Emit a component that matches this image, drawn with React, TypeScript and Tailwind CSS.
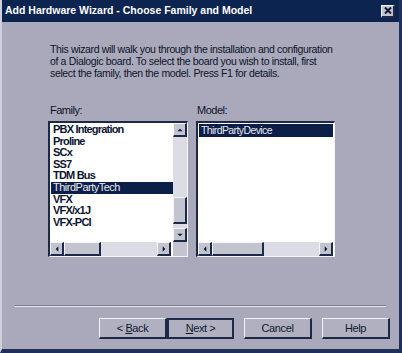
import React from "react";

const font = { fontFamily: '"Liberation Sans", Arial, sans-serif' };

function Arrow({ dir }: { dir: "up" | "down" | "left" | "right" }) {
  const pts: Record<string, string> = {
    up: "1,5 5,1 9,5",
    down: "1,1 5,5 9,1",
    left: "5,1 1,5 5,9",
    right: "1,1 5,5 1,9",
  };
  const vb = dir === "up" || dir === "down" ? "0 0 10 6" : "0 0 6 10";
  const w = dir === "up" || dir === "down" ? 8 : 4;
  const h = dir === "up" || dir === "down" ? 4 : 8;
  return (
    <svg width={w} height={h} viewBox={vb}>
      <polygon points={pts[dir]} fill="#0b1a3a" />
    </svg>
  );
}

function SBtn({ dir }: { dir: "up" | "down" | "left" | "right" }) {
  return (
    <div className="w-[14px] h-[14px] shrink-0 bg-[#c4c4d0] border-t border-l border-t-[#f4f4f8] border-l-[#f4f4f8] border-r-2 border-b-2 border-r-[#1c2a48] border-b-[#1c2a48] flex items-center justify-center">
      <Arrow dir={dir} />
    </div>
  );
}

function HScroll({ thumb, track }: { thumb: number; track: number }) {
  return (
    <div className="flex h-[14px] items-stretch">
      <SBtn dir="left" />
      <div className="shrink-0 bg-[#c4c4d0] border-t border-l border-t-[#f4f4f8] border-l-[#f4f4f8] border-r-2 border-b-2 border-r-[#1c2a48] border-b-[#1c2a48]" style={{ width: thumb }} />
      <div className="bg-[#dcdce4]" style={{ width: track }} />
      <SBtn dir="right" />
    </div>
  );
}

const families = [
  "PBX Integration",
  "Proline",
  "SCx",
  "SS7",
  "TDM Bus",
  "ThirdPartyTech",
  "VFX",
  "VFX/x1J",
  "VFX-PCI",
];

const btn3d =
  "w-[68px] h-[21px] bg-[#b0b0c0] text-[11px] tracking-[-0.4px] text-[#10182c] border-t border-l border-t-[#f4f4f8] border-l-[#f4f4f8] border-r-2 border-b-2 border-r-[#1c2a48] border-b-[#1c2a48]";

export default function App() {
  return (
    <div className="w-[402px] h-[353px] bg-[#a9a9bb] relative overflow-hidden" style={font}>
      <div className="h-full flex flex-col border-r-[3px] border-b-[4px] border-r-[#1f3158] border-b-[#1f3158] border-l-2 border-l-[#d0d0dc]">
        {/* title bar */}
        <div className="h-[22px] bg-[#0c2450] flex items-center justify-between pl-[3px] pr-[4px]">
          <span className="text-white font-bold text-[10.5px]">
            Add Hardware Wizard - Choose Family and Model
          </span>
          <div className="w-[14px] h-[13px] bg-[#c4c4d0] border-t border-l border-[#f4f4f8] border-r-2 border-b-2 border-r-[#1c2a48] border-b-[#1c2a48] flex items-center justify-center">
            <svg width="8" height="7" viewBox="0 0 8 7">
              <path d="M1 0.5 L7 6.5 M7 0.5 L1 6.5" stroke="#0b1a3a" strokeWidth="2" />
            </svg>
          </div>
        </div>

        <div className="flex-1 flex flex-col">
          <p className="pl-[48px] pt-[21px] text-[10.5px] tracking-[-0.35px] leading-[12px] text-[#0c1428] whitespace-nowrap">
            This wizard will walk you through the installation and configuration
            <br />
            of a Dialogic board. To select the board you wish to install, first
            <br />
            select the family, then the model. Press F1 for details.
          </p>

          <div className="flex pl-[46px] mt-[25px] gap-[8px]">
            {/* Family */}
            <div className="flex flex-col">
              <span className="ml-[2px] text-[11px] tracking-[-0.5px] leading-[12px] text-[#0c1428] mb-[5px]">Family:</span>
              <div className="w-[140px] h-[136px] border-t-2 border-l-2 border-t-[#1c2a48] border-l-[#1c2a48] border-r border-b border-r-[#f4f4f8] border-b-[#f4f4f8] bg-white flex flex-col">
                <div className="flex flex-1 min-h-0">
                  <div className="flex-1 pt-[1px] pl-[1px]">
                    {families.map((f) => (
                      <div
                        key={f}
                        className={
                          "h-[11.6px] leading-[11.6px] text-[11px] pl-[2px] whitespace-nowrap " +
                          (f === "ThirdPartyTech"
                            ? "bg-[#0c1f48] text-[#e8e8f0] font-normal tracking-[-0.5px]"
                            : "text-[#0c1430] font-bold tracking-[-0.8px]")
                        }
                      >
                        {f}
                      </div>
                    ))}
                  </div>
                  <div className="w-[14px] flex flex-col">
                    <SBtn dir="up" />
                    <div className="h-[60px] bg-[#dcdce4]" />
                    <div className="h-[27px] bg-[#c4c4d0] border-t border-l border-t-[#f4f4f8] border-l-[#f4f4f8] border-r-2 border-b-2 border-r-[#1c2a48] border-b-[#1c2a48]" />
                    <div className="flex-1 bg-[#dcdce4]" />
                    <SBtn dir="down" />
                  </div>
                </div>
                <div className="flex">
                  <div className="flex-1">
                    <HScroll thumb={37} track={56} />
                  </div>
                  <div className="w-[14px] h-[14px] bg-[#c4c4d0]" />
                </div>
              </div>
            </div>

            {/* Model */}
            <div className="flex flex-col">
              <span className="ml-[1px] text-[11px] tracking-[-0.5px] leading-[12px] text-[#0c1428] mb-[5px]">Model:</span>
              <div className="w-[139px] h-[136px] border-t-2 border-l-2 border-t-[#1c2a48] border-l-[#1c2a48] border-r border-b border-r-[#f4f4f8] border-b-[#f4f4f8] bg-white flex flex-col">
                <div className="flex-1 pt-[1px] pl-[1px] pr-[1px]">
                  <div className="h-[13px] leading-[13px] text-[10.5px] tracking-[-0.6px] pl-[2px] bg-[#0c1f48] text-[#e8e8f0]">ThirdPartyDevice</div>
                </div>
                <HScroll thumb={52} track={55} />
              </div>
            </div>
          </div>

          <div className="flex-1" />

          <div className="mx-[13px] h-[2px] border-t border-t-[#7c7c90] border-b border-b-[#e4e4ec]" />

          <div className="flex justify-end pr-[9px] pt-[11px] pb-[10px]">
            <div className="flex">
              <button className={btn3d}>
                &lt; <u>B</u>ack
              </button>
              <button className="w-[67px] h-[21px] bg-[#b0b0c0] text-[11px] tracking-[-0.4px] text-[#10182c] border-2 border-[#1c2a48]">
                <u>N</u>ext &gt;
              </button>
            </div>
            <button className={"ml-[10px] " + btn3d}>Cancel</button>
            <button className={"ml-[10px] " + btn3d}>Help</button>
          </div>
        </div>
      </div>
    </div>
  );
}
